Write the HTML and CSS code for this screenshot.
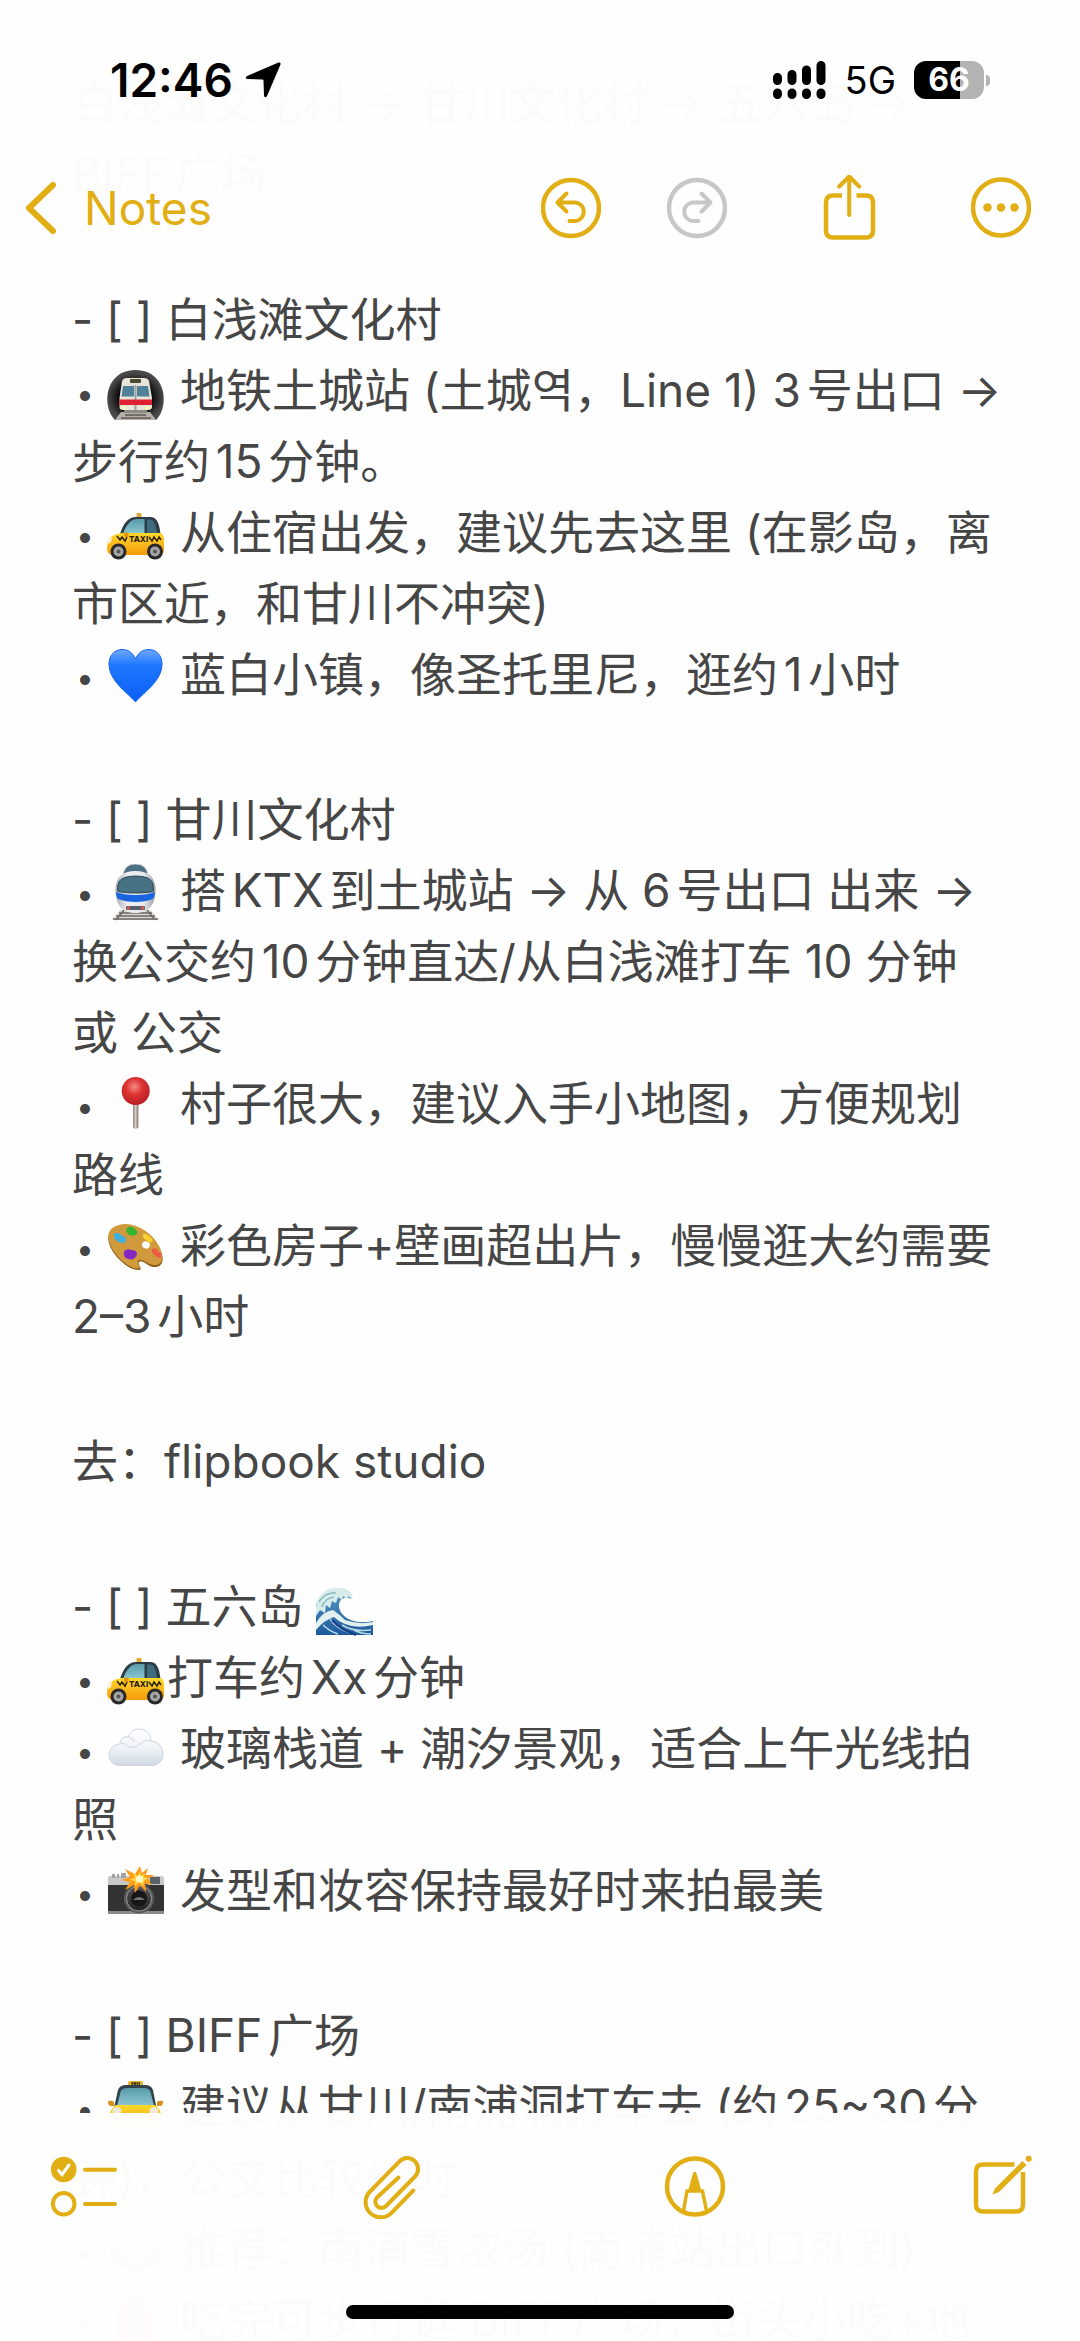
FILE: index.html
```html
<!DOCTYPE html>
<html lang="zh-CN">
<head>
<meta charset="utf-8">
<meta name="viewport" content="width=device-width, initial-scale=1">
<title>Notes</title>
<link rel="stylesheet" href="styles.css">
</head>
<body>
<svg class="sprites" aria-hidden="true">
  <defs>
    <linearGradient id="heart-fill" x1="0" y1="0" x2="0" y2="1"><stop offset="0" stop-color="#6fa8ff"/><stop offset=".3" stop-color="#1f78ff"/><stop offset="1" stop-color="#0a5df5"/></linearGradient>
    <linearGradient id="taxi-body" x1="0" y1="0" x2="0" y2="1"><stop offset="0" stop-color="#ffd92a"/><stop offset="1" stop-color="#f59a0c"/></linearGradient>
    <linearGradient id="glass" x1="0" y1="0" x2="0" y2="1"><stop offset="0" stop-color="#5a9bab"/><stop offset="1" stop-color="#8cc7d2"/></linearGradient>
    <linearGradient id="cloud-fill" x1="0" y1="0" x2="0" y2="1"><stop offset="0" stop-color="#ffffff"/><stop offset=".55" stop-color="#eef2f7"/><stop offset="1" stop-color="#cfd7e3"/></linearGradient>
    <linearGradient id="wave-fill" x1="0" y1="0" x2="0" y2="1"><stop offset="0" stop-color="#5b9bc4"/><stop offset="1" stop-color="#1d5a9c"/></linearGradient>
    <radialGradient id="pin-fill" cx=".45" cy=".35" r=".65"><stop offset="0" stop-color="#f58a84"/><stop offset=".45" stop-color="#dc3434"/><stop offset="1" stop-color="#b81d22"/></radialGradient>
    <radialGradient id="tunnel" cx=".5" cy=".55" r=".5"><stop offset=".55" stop-color="#050505"/><stop offset="1" stop-color="#4a4a4a"/></radialGradient>
    <linearGradient id="train-fill" x1="0" y1="0" x2="1" y2="0"><stop offset="0" stop-color="#a9adb4"/><stop offset=".3" stop-color="#eceef1"/><stop offset=".7" stop-color="#e6e8eb"/><stop offset="1" stop-color="#9b9fa6"/></linearGradient>
    <linearGradient id="lens-fill" x1="0" y1="0" x2="0" y2="1"><stop offset="0" stop-color="#555"/><stop offset="1" stop-color="#222"/></linearGradient>
  </defs>

  <symbol id="metro" viewBox="0 0 57 57">
    <path d="M8 56C-6 42 -2 6 28.500 6S63 42 49 56Z" fill="url(#tunnel)"/>
    <path d="M14 48H43L49 56H8Z" fill="#b5b0ac"/>
    <path d="M18 51H39M14 54H44" stroke="#5e5853" stroke-width="1.500"/>
    <path d="M15 17Q16 14 20 14H37Q41 14 42 17L45 34V43Q45 46 41 46H16Q12.500 46 12.500 43V34Z" fill="#e9e4d8"/>
    <path d="M16 22H27V32.500H14.500ZM30 22H41L42.500 32.500H30Z" fill="#4f8199"/>
    <path d="M27.500 21H29.500V46H27.500Z" fill="#9aa1a5"/>
    <rect x="23" y="15" width="11" height="4" rx="1" fill="#4b4a30"/>
    <path d="M12.500 35.500H45V41H12.500Z" fill="#e01f33"/>
    <path d="M14 42.500H19V45H15ZM38 42.500H43.500L43 45H38Z" fill="#fff6b0"/>
    <path d="M17 46H40V49H17Z" fill="#8d8a86"/>
  </symbol>

  <symbol id="taxi" viewBox="0 0 57 57">
    <rect x="29.500" y="7" width="5" height="5" rx="1" fill="#e0a732"/>
    <path d="M13 28C16 18 21 11 29 11H43C49 11 52 15 53.500 28Z" fill="#2e3c46"/>
    <path d="M16 28C19 19 24 13 30 13H37.500V28Z" fill="url(#glass)"/>
    <path d="M40 13.500H43C47 13.500 49 18 50 28H40Z" fill="#3f6b7e"/>
    <path d="M14 27H54Q57 29 57 34V45Q56 49 52 49H5Q0 48 0 42L1 34Q4 29 14 27Z" fill="url(#taxi-body)"/>
    <path d="M1 33L5 31 4 36 1 38Z" fill="#fff4dc"/>
    <path d="M10 30l3 4 2-3 3 4 2-4M42 31l3 4 2-4 3 4 2-4 2 3" fill="none" stroke="#2b2208" stroke-width="1.500"/>
    <text x="22" y="36" class="taxi-label">TAXI</text>
    <path d="M17 27q3-2 5 1l-1 3h-4Z" fill="#e79410"/>
    <circle cx="11.500" cy="45.500" r="8" fill="#292929"/><circle cx="11.500" cy="45.500" r="5" fill="#a5a5a5"/><circle cx="11.500" cy="45.500" r="2" fill="#555"/>
    <circle cx="48" cy="45.500" r="8" fill="#292929"/><circle cx="48" cy="45.500" r="5" fill="#a5a5a5"/><circle cx="48" cy="45.500" r="2" fill="#555"/>
  </symbol>

  <symbol id="heart" viewBox="0 0 57 57">
    <path d="M28.500 54C20 44 2 33 2 16 2 7 8 1.500 15 1.500 21.500 1.500 26 5 28.500 11 31 5 35.500 1.500 42 1.500 49 1.500 55 7 55 16 55 33 37 44 28.500 54Z" fill="url(#heart-fill)" stroke="#1464f0" stroke-width="1"/>
  </symbol>

  <symbol id="train" viewBox="0 0 57 57">
    <path d="M13 46H44L52 56H5Z" fill="#dedbd7"/>
    <path d="M12 49H45M9 52H48M6 55H51M17 46L9 56M40 46L48 56" stroke="#6b6662" stroke-width="1.500"/>
    <path d="M16 12Q17 0 28.500 0T41 12Z" fill="#4b7283" stroke="#c9ccd0" stroke-width="1"/>
    <path d="M8.500 25Q9 7 28.500 7T48.500 25C49 40 42 49 28.500 49S8 40 8.500 25Z" fill="url(#train-fill)"/>
    <path d="M11 21Q12 12 28.500 12T46 21L46.500 27Q42 29 28.500 29T10.500 27Z" fill="#467284" stroke="#2e4752" stroke-width="1"/>
    <path d="M9 28Q16 31 28.500 31T48 28Q47.500 33 46 35 38 38 28.500 38T11 35Q9 32 9 28Z" fill="#1766df"/>
    <rect x="19" y="42" width="19" height="4" rx="1" fill="#55606c"/>
    <path d="M20 44h3M34 44h3" stroke="#e2574a" stroke-width="3"/>
  </symbol>

  <symbol id="pin" viewBox="0 0 57 57">
    <rect x="26" y="25" width="5.500" height="26.500" rx="2" fill="#9a908a"/>
    <rect x="27.500" y="25" width="2" height="26" fill="#d4ccc6"/>
    <circle cx="28.700" cy="14" r="14" fill="url(#pin-fill)"/>
  </symbol>

  <symbol id="palette" viewBox="0 0 57 57">
    <path d="M12 7C26 2 47 15 53 30 59 43 54 49 46 48 40 47 35 40 32 43 30 46 37 50 32 51 22 52 4 36 1.500 22 .5 14 4 9 12 7Z" fill="#8f5c17"/>
    <path d="M12 6C26 1 47 14 53 29 58 41 54 47 46 46 40 45 34 38 31 42 29 45 36 49 31 49.500 21 50 4 34 1.500 20 .5 13 4 8 12 6Z" fill="#d09a3c"/>
    <ellipse cx="39" cy="26" rx="4" ry="3.500" fill="#fff" transform="rotate(20 39 26)"/>
    <path d="M7 15q4-3 7 1 6 2 5 6-3 4-7 1-6-2-5-8Z" fill="#3fb0de"/>
    <path d="M20 9q5-3 8 1 4 3 1 6-5 2-8-1-3-3-1-6Z" fill="#35b431"/>
    <path d="M36 15q4-1 7 3 4 2 2 5-4 1-6-2-4-2-3-6Z" fill="#f6cf2e"/>
    <path d="M45 30q4-2 6 2 5 4 3 7-4 0-6-3-4-2-3-6Z" fill="#f05a44"/>
    <path d="M17 32q4-3 7-1 6 0 6 4-2 7-8 5-6 0-5-8Z" fill="#8426c4"/>
  </symbol>

  <symbol id="wave" viewBox="0 0 57 57">
    <path d="M0 25C4 13 14 6 26 9 34 10 38 15 35 19 29 15 22 20 23 27 25 39 41 45 57 41V55H0Z" fill="url(#wave-fill)"/>
    <path d="M0 27C2 12 13 6 24 8 31 8 38 12 36 19L32 16 31 19 27 16 26 20 22 17 20 23 16 21 14 28 10 25 9 33 4 30 0 36Z" fill="#d9ecec"/>
    <path d="M3 22Q9 12 20 13M6 27Q9 18 18 17" stroke="#8bbac4" stroke-width="1.500" fill="none"/>
    <path d="M0 43Q7 31 17 30 23 34 29 40 43 45 57 42V45Q41 49 29 44 22 41 18 37 8 40 0 50Z" fill="#e2f0f0"/>
    <path d="M14 39Q20 48 34 53M7 45Q13 51 22 54M26 45Q37 52 55 50M38 50Q45 54 55 54" stroke="#b9dbe6" stroke-width="1.500" fill="none"/>
    <path d="M16 40Q25 50 40 55" stroke="#123f86" stroke-width="2" fill="none"/>
  </symbol>

  <symbol id="cloud" viewBox="0 0 57 57">
    <path d="M14 43.500C6 43.500 2 39 2 33 2 27 7 22 13 22 13 17 17 14 21 15 23 10 27 7 32 7 39 7 44 12 44 19 51 19 56 25 56 32 56 39 51 43.500 44 43.500Z" fill="url(#cloud-fill)" stroke="#cdd4df" stroke-width="1"/>
    <path d="M21 15Q26 16 27 20M13 22Q17 20 20 24 28 27 33 22 38 17 44 19" fill="none" stroke="#dbe1ea" stroke-width="1.500"/>
  </symbol>

  <symbol id="camera" viewBox="0 0 57 57">
    <path d="M3 12H54Q57 12 57 15V22H1V15Q1 12 3 12Z" fill="#c8c8c6"/>
    <path d="M5 10h3v4h-3zM10 10h2v4h-2zM14 9h5v5h-5z" fill="#a2a2a0"/>
    <path d="M1 21H57V50H1Z" fill="#333"/>
    <path d="M1 47H57V50H1Z" fill="#8a8a8a"/>
    <rect x="43" y="13" width="10" height="7" fill="#5b6266"/>
    <path d="M22 21Q31 15 42 21V26H22Z" fill="#3b3b3b"/>
    <circle cx="32" cy="34.500" r="15" fill="#5a5a5a"/>
    <circle cx="32" cy="34.500" r="12.500" fill="url(#lens-fill)" stroke="#999" stroke-width="1"/>
    <circle cx="32" cy="34.500" r="8" fill="#161616"/>
    <path d="M26 36Q32 30 38 36Z" fill="#777"/>
    <path d="M33 2L35 9 41 4 39 11 47 11 41 15 45 21 38 19 39 28 33 21 28 29 27 21 18 26 23 18 14 16 23 13 18 5 28 10Z" fill="#ff9d16"/>
    <path d="M33 7L34 12 38 9 37 13 41 14 37 17 36 22 32 18 28 22 28 17 22 16 28 14 26 9 31 12Z" fill="#ffd94a"/>
    <circle cx="32.500" cy="15" r="3.500" fill="#fff9cf"/>
  </symbol>

  <symbol id="cab" viewBox="0 0 57 57">
    <rect x="21" y="1" width="15" height="6" rx="2" fill="#e2b52f"/>
    <path d="M24.500 3.500H33" stroke="#3a3312" stroke-width="2.500" stroke-dasharray="2 .5"/>
    <path d="M7 28L11 10Q13 5 19 5H38Q44 5 46 10L49.500 28Z" fill="#33424a"/>
    <path d="M10 26L13.500 12Q15 8 20 8H37Q42 8 43.500 12L47 26Z" fill="url(#glass)"/>
    <path d="M1 21Q5 20 7 22V26H3Q1 25 1 21ZM56 21Q52 20 50 22V26H54Q56 25 56 21Z" fill="#d98e1c"/>
    <path d="M9 25H48Q54 29 54 36V47Q54 49 50 49H7Q3 49 3 47V36Q3 29 9 25Z" fill="url(#taxi-body)"/>
    <path d="M18 33H39V38H18Z" fill="#3c3a33"/>
    <ellipse cx="10" cy="31" rx="4.500" ry="4" fill="#eeeadb"/><ellipse cx="47" cy="31" rx="4.500" ry="4" fill="#eeeadb"/>
  </symbol>

  <symbol id="bowl" viewBox="0 0 57 57"><path d="M3 26H54Q52 48 28 48T3 26Z" fill="#7c7a66"/><ellipse cx="28" cy="26" rx="25" ry="9" fill="#d8b460"/></symbol>
  <symbol id="bag" viewBox="0 0 57 57"><path d="M10 16Q28-8 47 16V50Q28 56 10 50Z" fill="#d6546a"/></symbol>
</svg>

<div class="screen">
  <header class="top">
    <div class="status">
      <div class="clock">
        <time>12:46</time>
        <svg class="location" viewBox="0 0 36 36" role="img" aria-label="Location in use"><path d="M33.500 .5Q36 0 35.500 2.500L22 34Q20.500 36.500 19 34L18.500 18.500Q18.500 17.500 17.500 17.500L2 17Q-.5 16 2 14Z"/></svg>
      </div>
      <div class="signals">
        <svg class="bars" viewBox="0 0 54 38" role="img" aria-label="Signal strength"><path d="M4.500 16.500V19.500M19 13.500V19.500M33.500 9V19.500M48 4.500V19.500M4.500 32V33.500M19 32V33.500M33.500 32V33.500M48 32V33.500"/></svg>
        <span class="network">5G</span>
        <span class="battery"><span class="level">66</span></span>
      </div>
    </div>
    <nav class="nav">
      <button class="back" type="button">
        <svg width="32" height="54" viewBox="0 0 32 54" aria-hidden="true"><path d="M28 4L4 27 28 50" class="line thick"/></svg>
        <span>Notes</span>
      </button>
      <div class="actions">
        <div class="history">
          <button type="button" aria-label="Undo"><svg width="60" height="66" viewBox="540 175 60 66"><circle cx="570" cy="208" r="28" class="line"/><path d="M565.500 193.500L556.500 202.500 565.500 211.500M557 202.500H574.500A9.300 9.300 0 0 1 574.500 221H568.500" class="line fine"/></svg></button>
          <button type="button" aria-label="Redo" disabled><svg width="60" height="66" viewBox="666 175 60 66"><circle cx="696" cy="208" r="28" class="line"/><path d="M700.500 193.500L709.500 202.500 700.500 211.500M709 202.500H691.500A9.300 9.300 0 0 0 691.500 221H697.500" class="line fine"/></svg></button>
        </div>
        <button type="button" aria-label="Share"><svg width="60" height="66" viewBox="819 174 60 66"><path d="M842 194.500H833Q826 194.500 826 201.500V229.500Q826 236.500 833 236.500H866Q873 236.500 873 229.500V201.500Q873 194.500 866 194.500H856.500" class="line butt"/><path d="M849.200 214V176M839.200 185.500L849.200 175.500 859.200 185.500" class="line fine"/></svg></button>
        <button type="button" aria-label="More"><svg width="60" height="66" viewBox="971 175 60 66"><circle cx="1001" cy="207.500" r="28" class="line"/><g class="solid"><circle cx="987.500" cy="207.500" r="4.200"/><circle cx="1001" cy="207.500" r="4.200"/><circle cx="1014.500" cy="207.500" r="4.200"/></g></svg></button>
      </div>
    </nav>
  </header>

  <main class="note">
    <p>白浅滩文化村 → 甘川文化村 → 五六岛 →<br>BIFF广场</p>
    <p>- [ ] 白浅滩文化村<br>
      <span class="dot">•</span><svg class="emoji" role="img" aria-label="地铁"><use href="#metro"/></svg> 地铁土城站 (土城역，Line 1) 3号出口 →<br>步行约15分钟。<br>
      <span class="dot">•</span><svg class="emoji" role="img" aria-label="出租车"><use href="#taxi"/></svg> 从住宿出发，建议先去这里 (在影岛，离<br>市区近，和甘川不冲突)<br>
      <span class="dot">•</span><svg class="emoji" role="img" aria-label="蓝心"><use href="#heart"/></svg> 蓝白小镇，像圣托里尼，逛约1小时</p>
    <p>- [ ] 甘川文化村<br>
      <span class="dot">•</span><svg class="emoji" role="img" aria-label="火车"><use href="#train"/></svg> 搭KTX到土城站 → 从 6号出口 出来 →<br>换公交约10分钟直达/从白浅滩打车 10 分钟<br>或 公交<br>
      <span class="dot">•</span><svg class="emoji" role="img" aria-label="图钉"><use href="#pin"/></svg> 村子很大，建议入手小地图，方便规划<br>路线<br>
      <span class="dot">•</span><svg class="emoji" role="img" aria-label="调色板"><use href="#palette"/></svg> 彩色房子+壁画超出片，慢慢逛大约需要<br>2–3小时</p>
    <p>去：flipbook studio</p>
    <p>- [ ] 五六岛 <svg class="emoji" role="img" aria-label="海浪"><use href="#wave"/></svg><br>
      <span class="dot">•</span><svg class="emoji" role="img" aria-label="出租车"><use href="#taxi"/></svg>打车约Xx分钟<br>
      <span class="dot">•</span><svg class="emoji" role="img" aria-label="云"><use href="#cloud"/></svg> 玻璃栈道 + 潮汐景观，适合上午光线拍<br>照<br>
      <span class="dot">•</span><svg class="emoji" role="img" aria-label="相机"><use href="#camera"/></svg> 发型和妆容保持最好时来拍最美</p>
    <p>- [ ] BIFF广场<br>
      <span class="dot">•</span><svg class="emoji" role="img" aria-label="出租车"><use href="#cab"/></svg> 建议从甘川/南浦洞打车去 (约25~30分<br>钟)，公交比较省时<br>
      <span class="dot">•</span><svg class="emoji" role="img" aria-label="汤"><use href="#bowl"/></svg> 推荐：南浦雪浓汤 (南浦站出口就到)<br>
      <span class="dot">•</span><svg class="emoji" role="img" aria-label="包"><use href="#bag"/></svg> 吃完可步行逛 BIFF广场，街头小吃+地</p>
  </main>

  <footer class="bottom">
    <div class="tools">
      <button type="button" aria-label="Checklist"><svg width="68" height="66" viewBox="50 2155 68 66"><circle cx="63.700" cy="2169.500" r="12.800" class="solid"/><path d="M58.500 2170.500L62 2174.500 69 2165" class="tick"/><circle cx="63.700" cy="2203.700" r="10.800" class="line fine"/><path d="M85 2169.700H115M85 2204H115" class="line fine"/></svg></button>
      <button type="button" aria-label="Attach"><svg width="60" height="66" viewBox="361 2155 60 66"><path d="M413.300 2190.500L391.500 2212.800A15 15 0 0 1 370 2191.500L399.500 2161.300A10.700 10.700 0 0 1 415 2176.500L386 2206A6 6 0 0 1 377 2197.500L398.500 2177.500" class="line fine"/></svg></button>
      <button type="button" aria-label="Markup"><svg width="66" height="66" viewBox="664 2155 66 66"><circle cx="695" cy="2186.500" r="28" class="line"/><path d="M683.500 2211L687 2191H702.500L706.500 2211" class="line slim"/><path d="M693 2173Q694.700 2170.500 696.400 2173L701.500 2191H688Z" class="solid"/></svg></button>
      <button type="button" aria-label="New note"><svg width="60" height="66" viewBox="973 2155 60 66"><path d="M1014.500 2164.500H983Q976 2164.500 976 2171.500V2204.500Q976 2211.500 983 2211.500H1016Q1023 2211.500 1023 2204.500V2172" class="line butt"/><path d="M992.500 2194.500L995 2188.500 1022.500 2161 1026.500 2165 999 2192Z" class="solid"/><circle cx="1028.700" cy="2158.700" r="3" class="solid"/></svg></button>
    </div>
    <div class="home"></div>
  </footer>
</div>
</body>
</html>
```
FILE: styles.css
```css
* {
  box-sizing: border-box;
}

body {
  margin: 0;
  background: #fefefe;
  color: #464646;
  font-family: Inter, "Noto Sans CJK SC", "Noto Sans CJK KR", sans-serif;
  font-size: 46px;
  font-variation-settings: "opsz" 22;
  line-height: 71px;
}

.sprites {
  position: absolute;
  width: 0;
  height: 0;
}

.screen {
  position: relative;
  height: 100vh;
  overflow: hidden;
}

.top,
.bottom {
  position: absolute;
  left: 0;
  right: 0;
  background: rgba(254, 254, 254, 0.985);
}

.top {
  top: 0;
  padding-top: 50px;
}

.bottom {
  bottom: 0;
  height: 228px;
  padding-top: 42px;
}

.status,
.clock,
.signals,
.nav,
.back,
.actions,
.history,
.tools {
  display: flex;
  align-items: center;
}

.status {
  justify-content: space-between;
  height: 60px;
  padding: 0 96px 0 110px;
  color: #000;
}

.clock {
  gap: 12px;
  font-weight: 600;
}

.location {
  width: 36px;
  height: 36px;
}

.signals {
  gap: 18px;
}

.bars {
  width: 54px;
  height: 38px;
  fill: none;
  stroke: #000;
  stroke-width: 9;
  stroke-linecap: round;
}

.network {
  font-size: 38px;
}

.battery {
  position: relative;
}

.battery::after {
  content: "";
  position: absolute;
  top: 14px;
  right: -6px;
  width: 4px;
  height: 11px;
  border-radius: 0 4px 4px 0;
  background: #b3b3b3;
}

.level {
  display: block;
  width: 70px;
  height: 38px;
  border-radius: 12px;
  background: linear-gradient(90deg, #000 66%, #b3b3b3 66%);
  color: #fff;
  font-size: 32px;
  font-weight: 700;
  line-height: 38px;
  text-align: center;
}

.nav {
  justify-content: space-between;
  height: 174px;
  padding: 22px 49px 0 25px;
}

button {
  padding: 0;
  border: 0;
  background: none;
  color: #e1ae14;
  font: inherit;
  font-variation-settings: inherit;
}

button:disabled {
  color: #c7c7c7;
}

button svg {
  display: block;
}

.back {
  gap: 27px;
}

.actions {
  gap: 92px;
}

.history {
  gap: 66px;
}

.line {
  fill: none;
  stroke: currentColor;
  stroke-width: 4.5;
  stroke-linecap: round;
  stroke-linejoin: round;
}

.fine {
  stroke-width: 4;
}

.slim {
  stroke-width: 3.5;
}

.thick {
  stroke-width: 6;
}

.butt {
  stroke-linecap: butt;
}

.solid {
  fill: currentColor;
}

.tick {
  fill: none;
  stroke: #fff;
  stroke-width: 3;
  stroke-linecap: round;
}

.note {
  display: flex;
  flex-direction: column;
  gap: 74px;
  padding: 68px 0 0 72px;
  white-space: nowrap;
  text-autospace: normal;
}

.note p {
  margin: 0;
}

.dot {
  display: inline-block;
  width: 35px;
  padding-left: 4px;
  font-size: 32px;
  line-height: 32px;
  vertical-align: 2px;
}

.emoji {
  width: 57px;
  height: 57px;
  margin: -8px 3px -8px 0;
  vertical-align: -6px;
}

.taxi-label {
  font-size: 8px;
  font-weight: 800;
  fill: #2b2208;
}

.tools {
  justify-content: space-between;
  padding: 0 47px 0 50px;
}

.home {
  width: 36%;
  height: 14px;
  margin: 84px auto 0;
  border-radius: 7px;
  background: #000;
}
```
